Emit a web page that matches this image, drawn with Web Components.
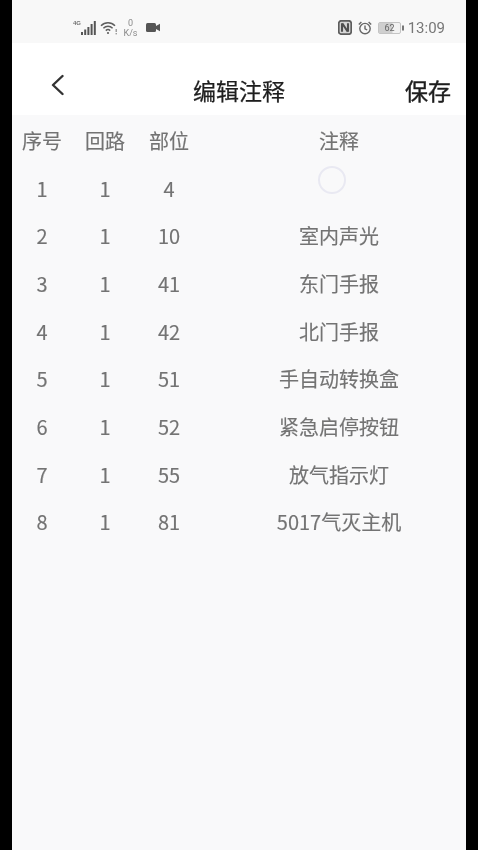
<!DOCTYPE html>
<html lang="zh">
<head>
<meta charset="utf-8">
<title>编辑注释</title>
<style>
html, body { margin: 0; padding: 0; background: #000; }
</style>
</head>
<body>
<app-screen>
    <status-bar slot="status"></status-bar>
    <nav-bar slot="nav" title="编辑注释" action="保存"></nav-bar>
    <note-table id="table"></note-table>
</app-screen>

<script>
const FONT = '"Noto Sans CJK SC", "Roboto", "Noto Sans", sans-serif';

// phone screen between the two black bars
class AppScreen extends HTMLElement {
    constructor() {
        super();
        this.attachShadow({ mode: 'open' });
        this.shadowRoot.innerHTML = `
            <style>
                :host {
                    display: flex;
                    flex-direction: column;
                    width: 454px;
                    height: 850px;
                    margin: 0 12px;
                    background: #f9f9fa;
                    overflow: hidden;
                    filter: blur(0.5px);
                    font-family: ${FONT};
                }
            </style>
            <slot name="status"></slot>
            <slot name="nav"></slot>
            <slot></slot>
        `;
    }
}

class StatusBar extends HTMLElement {
    constructor() {
        super();
        this.attachShadow({ mode: 'open' });
        this.shadowRoot.innerHTML = `
            <style>
                :host {
                    display: flex;
                    align-items: center;
                    justify-content: space-between;
                    box-sizing: border-box;
                    height: 43px;
                    padding: 14px 21px 2px 61px;
                    background: #f8f8f8;
                    color: #6f6f6f;
                }
                .group { display: flex; align-items: center; }
                .net {
                    font: 700 6px/7px "Liberation Sans", sans-serif;
                    align-self: flex-start;
                    margin: 2px 0 0 0;
                    width: 8px;
                }
                .speed {
                    display: flex;
                    flex-direction: column;
                    align-items: center;
                    font: 9px/10px "Roboto", sans-serif;
                    color: #8a8a8a;
                    margin: 0 7px 0 5px;
                    width: 17px;
                }
                .time { font: 15px/18px "Roboto", sans-serif; color: #777; margin-left: 4px; }
                svg { display: block; }
            </style>
            <div class="group">
                <span class="net">4G</span>
                <svg width="15" height="14" viewBox="0 0 15 14" fill="#555">
                    <rect x="0" y="11" width="2" height="3"/>
                    <rect x="3.2" y="8.5" width="2" height="5.5"/>
                    <rect x="6.4" y="6" width="2" height="8"/>
                    <rect x="9.6" y="3" width="2" height="11"/>
                    <rect x="12.8" y="0" width="2" height="14"/>
                </svg>
                <svg style="margin-left:4px" width="17" height="14" viewBox="0 0 17 14" fill="none" stroke="#5e5e5e" stroke-width="1.5">
                    <path d="M1 4.8C5 .8 11 .8 15 4.8"/>
                    <path d="M3.4 7.2C6 4.6 10 4.6 12.6 7.2"/>
                    <path d="M5.8 9.6C7.2 8.3 8.8 8.3 10.2 9.6"/>
                    <circle cx="8" cy="12" r="1.1" fill="#5e5e5e" stroke="none"/>
                    <rect x="15.6" y="8" width="1.2" height="3" fill="#888" stroke="none"/>
                    <rect x="15.6" y="12" width="1.2" height="1.4" fill="#888" stroke="none"/>
                </svg>
                <div class="speed"><span>0</span><span>K/s</span></div>
                <svg width="14" height="9" viewBox="0 0 14 9" fill="#555">
                    <rect x="0" y="0" width="10" height="9" rx="1.5"/>
                    <path d="M10 3L14 .8V8.2L10 6Z"/>
                </svg>
            </div>
            <div class="group">
                <svg width="14" height="15" viewBox="0 0 14 15">
                    <rect x=".8" y=".8" width="12.4" height="13.4" rx="2.4" fill="#d6d6d6" stroke="#5c5c5c" stroke-width="1.7"/>
                    <path d="M4 3.2V11.8M10 3.2V11.8M4.2 3.2L9.8 11.8" fill="none" stroke="#4f4f4f" stroke-width="2.1"/>
                </svg>
                <svg style="margin-left:6px" width="14" height="14" viewBox="0 0 14 14" fill="none" stroke="#666" stroke-width="1.4">
                    <circle cx="7" cy="7.6" r="5.2"/>
                    <path d="M7 4.6V7.8L9.2 9"/>
                    <path d="M.8 3.4L3.4 1M13.2 3.4L10.6 1"/>
                </svg>
                <svg style="margin-left:6px" width="26" height="12" viewBox="0 0 26 12">
                    <rect x=".5" y=".5" width="22" height="11" rx="1.5" fill="#f2f2f2" stroke="#c4c4c4"/>
                    <rect x="1" y="1" width="13.5" height="10" fill="#cfcfcf"/>
                    <rect x="24" y="3.5" width="2" height="5" fill="#777"/>
                    <text x="11.5" y="9.2" text-anchor="middle" font-family="Roboto, sans-serif" font-size="9" fill="#666">62</text>
                </svg>
                <span class="time">13:09</span>
            </div>
        `;
    }
}

class NavBar extends HTMLElement {
    constructor() {
        super();
        this.attachShadow({ mode: 'open' });
        this.shadowRoot.innerHTML = `
            <style>
                :host {
                    display: grid;
                    grid-template-columns: 1fr auto 1fr;
                    align-items: center;
                    box-sizing: border-box;
                    height: 72px;
                    padding: 0 15px 0 39px;
                    background: #fff;
                    color: #1e1e1e;
                    font-family: ${FONT};
                }
                svg { display: block; margin-top: 12px; }
                .title { font-size: 23px; line-height: 32px; margin: 21px 0 0 -24px; -webkit-text-stroke: 0.25px #1e1e1e; }
                .action { font-size: 23px; line-height: 32px; justify-self: end; margin-top: 21px; -webkit-text-stroke: 0.45px #1e1e1e; }
            </style>
            <svg width="13" height="22" viewBox="0 0 13 22" fill="none" stroke="#333" stroke-width="2.4" stroke-linecap="round" stroke-linejoin="round">
                <path d="M11.5 2L2 11L11.5 20"/>
            </svg>
            <div class="title"></div>
            <div class="action"></div>
        `;
    }

    connectedCallback() {
        this.shadowRoot.querySelector('.title').textContent = this.getAttribute('title') || '';
        this.shadowRoot.querySelector('.action').textContent = this.getAttribute('action') || '';
    }
}

class NoteRow extends HTMLElement {
    constructor() {
        super();
        this.attachShadow({ mode: 'open' });
        this.shadowRoot.innerHTML = `
            <style>
                :host {
                    display: grid;
                    grid-template-columns: 60px 66px 62px 1fr;
                    align-items: center;
                    height: 47.7px;
                    color: #737373;
                    font-size: 20px;
                    text-align: center;
                    font-family: ${FONT};
                    -webkit-text-stroke: 0.15px #737373;
                }
                span { display: block; line-height: 28px; }
                .note { padding-left: 12px; position: relative; }
                .spinner {
                    position: absolute;
                    left: 118px;
                    top: -23px;
                    box-sizing: border-box;
                    width: 28px;
                    height: 28px;
                    border: 2px solid #e9e9f2;
                    border-radius: 50%;
                }
            </style>
            <span class="no"></span>
            <span class="loop"></span>
            <span class="part"></span>
            <span class="note"></span>
        `;
    }

    connectedCallback() {
        const root = this.shadowRoot;
        root.querySelector('.no').textContent = this.getAttribute('no');
        root.querySelector('.loop').textContent = this.getAttribute('loop');
        root.querySelector('.part').textContent = this.getAttribute('part');
        root.querySelector('.note').textContent = this.getAttribute('note') || '';
        if (this.hasAttribute('loading')) {
            const spinner = document.createElement('div');
            spinner.className = 'spinner';
            root.querySelector('.note').appendChild(spinner);
        }
    }
}

class NoteTable extends HTMLElement {
    constructor() {
        super();
        this.attachShadow({ mode: 'open' });
        this.shadowRoot.innerHTML = `
            <style>
                :host { display: block; padding-top: 2px; }
            </style>
            <div class="rows"></div>
        `;
    }

    connectedCallback() {
        const rows = this.shadowRoot.querySelector('.rows');
        const items = [
            ['序号', '回路', '部位', '注释'],
            ['1', '1', '4', '', true],
            ['2', '1', '10', '室内声光'],
            ['3', '1', '41', '东门手报'],
            ['4', '1', '42', '北门手报'],
            ['5', '1', '51', '手自动转换盒'],
            ['6', '1', '52', '紧急启停按钮'],
            ['7', '1', '55', '放气指示灯'],
            ['8', '1', '81', '5017气灭主机'],
        ];
        items.forEach(item => {
            const row = document.createElement('note-row');
            row.setAttribute('no', item[0]);
            row.setAttribute('loop', item[1]);
            row.setAttribute('part', item[2]);
            row.setAttribute('note', item[3]);
            if (item[4]) row.setAttribute('loading', '');
            rows.appendChild(row);
        });
    }
}

customElements.define('app-screen', AppScreen);
customElements.define('status-bar', StatusBar);
customElements.define('nav-bar', NavBar);
customElements.define('note-row', NoteRow);
customElements.define('note-table', NoteTable);
</script>
</body>
</html>
